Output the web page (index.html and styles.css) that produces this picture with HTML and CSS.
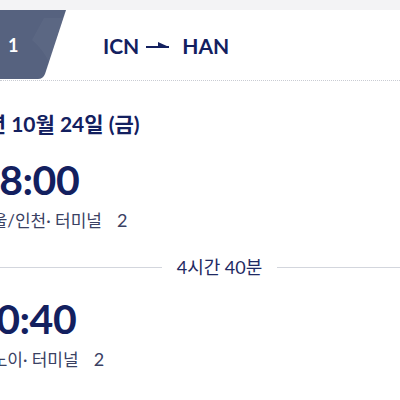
FILE: index.html
```html
<!DOCTYPE html>
<html lang="ko">
<head>
<meta charset="utf-8">
<link rel="stylesheet" href="styles.css">
</head>
<body>
<div class="band"></div>
<div class="card">
  <div class="header">
    <div class="tab">
      <svg class="tab-bg" width="66" height="70" viewBox="0 0 66 70">
        <path d="M0 0 H66 L45 64 Q43 69 38 69 H0 Z" fill="#56627f"/>
        <path d="M44 8 H63 L49 52 Q42 38 32 30 Z" fill="#ffffff" opacity="0.035"/>
      </svg>
      <span class="tab-num">1</span>
    </div>
    <div class="route">
      <span>ICN</span>
      <svg class="arrow" width="23" height="10" viewBox="0 0 23 10">
        <rect x="0" y="6" width="23" height="2" fill="#13205f"/>
        <path d="M12 2 L23 7 L12 7 Z" fill="#13205f"/>
      </svg>
      <span>HAN</span>
    </div>
  </div>
  <div class="body">
    <div class="date">2025년 10월 24일 (금)</div>
    <div class="time t1">08:00</div>
    <div class="place p1">서울/인천· 터미널<span class="term-no">2</span></div>
    <div class="duration"><span class="line"></span><span class="dur-text">4시간 40분</span><span class="line"></span></div>
    <div class="time t2">10:40</div>
    <div class="place p2">하노이· 터미널<span class="term-no">2</span></div>
  </div>
</div>
</body>
</html>
```
FILE: styles.css
```css
html, body {
  margin: 0;
  padding: 0;
  background: #ffffff;
  overflow: hidden;
}
body {
  width: 400px;
  height: 400px;
  font-family: Lato, "Noto Sans CJK KR", sans-serif;
  color: #13205f;
}
.band {
  height: 10px;
  background: #f3f3f5;
}
.card {
  background: #ffffff;
}
.header {
  height: 70px;
  display: flex;
  align-items: center;
  border-bottom: 1px dotted #c9ccd3;
  position: relative;
}
.tab {
  width: 66px;
  height: 70px;
  position: relative;
  flex: none;
}
.tab-bg {
  position: absolute;
  left: 0;
  top: 0;
  display: block;
}
.tab-num {
  position: absolute;
  left: 8px;
  top: 24px;
  font-size: 18px;
  font-weight: 700;
  color: #ffffff;
  line-height: 22px;
}
.route {
  margin-left: 37px;
  display: flex;
  align-items: center;
  font-size: 21px;
  font-weight: 700;
  line-height: 26px;
  padding-top: 2px;
}
.arrow {
  margin: 0 13px 0 7px;
  position: relative;
  top: -1px;
}
.body {
  margin-left: -24px;
}
.date {
  margin-top: 31px;
  margin-left: -38px;
  font-size: 21px;
  font-weight: 700;
  line-height: 24px;
  white-space: nowrap;
}
.time {
  font-size: 41px;
  font-weight: 700;
  line-height: 48px;
  letter-spacing: -0.5px;
  white-space: nowrap;
}
.t1 {
  margin-top: 20px;
}
.place {
  font-size: 17px;
  color: #3a4163;
  line-height: 22px;
  white-space: nowrap;
}
.term-no {
  margin-left: 15px;
  font-size: 18px;
}
.p1 {
  margin-top: 5px;
}
.duration {
  margin-left: 24px;
  margin-right: -39px;
  margin-top: 24px;
  display: flex;
  align-items: center;
  height: 22px;
}
.line {
  flex: 1;
  height: 1px;
  background: #d3d6dd;
}
.dur-text {
  font-size: 18px;
  color: #1f2a63;
  padding: 0 15px;
  line-height: 22px;
}
.t2 {
  margin-top: 17px;
  margin-left: -3px;
}
.p2 {
  margin-top: 5px;
}
```
